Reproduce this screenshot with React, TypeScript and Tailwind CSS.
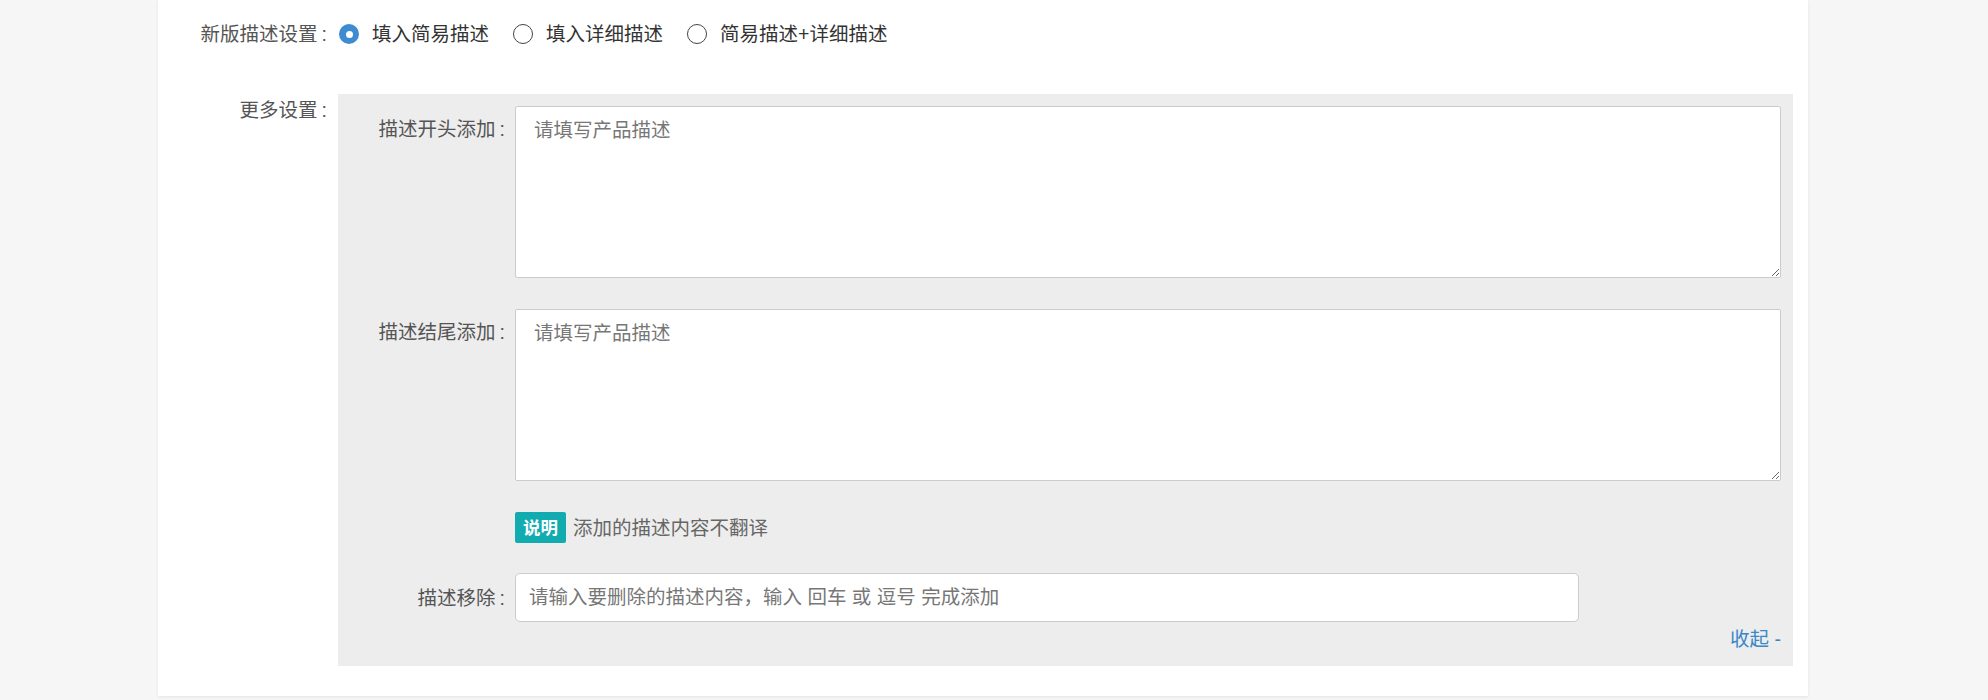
import React, { useState } from 'react';

// Bloque "descripción" del formulario de producto

const FONT = { fontFamily: '"Liberation Sans", "Noto Sans CJK SC", sans-serif' };

type Mode = 'simple' | 'detail' | 'both';

const Label: React.FC<{ text: string }> = ({ text }) => (
    <>
        {text}
        <span className="ml-[4px]">:</span>
    </>
);

const Radio: React.FC<{ checked: boolean; label: string; onClick: () => void }> = ({ checked, label, onClick }) => (
    <label className="flex items-center cursor-pointer mr-[24px]" onClick={onClick}>
        {checked ? (
            <span className="w-[20px] h-[20px] rounded-full bg-[#3d8bd0] flex items-center justify-center">
                <span className="w-[7px] h-[7px] rounded-full bg-white" />
            </span>
        ) : (
            <span className="w-[20px] h-[20px] rounded-full border border-[#444] bg-white" />
        )}
        <span className="ml-[13px] text-[#333]">{label}</span>
    </label>
);

const App: React.FC = () => {
    const [mode, setMode] = useState<Mode>('simple');

    return (
        <div className="min-h-[700px] bg-[#f6f6f6] text-[19.5px] leading-[26px]" style={FONT}>
            <div className="ml-[158px] w-[1650px] h-[696px] bg-white shadow-[0_1px_3px_rgba(0,0,0,0.08)] pt-[19px]">

                {/* Nueva configuración */}
                <div className="flex items-center h-[28px] mt-[1px]">
                    <div className="w-[180px] pr-[11px] text-right text-[#555] whitespace-nowrap">
                        <Label text="新版描述设置" />
                    </div>
                    <div className="flex items-center pl-[1px]">
                        <Radio checked={mode === 'simple'} label="填入简易描述" onClick={() => setMode('simple')} />
                        <Radio checked={mode === 'detail'} label="填入详细描述" onClick={() => setMode('detail')} />
                        <Radio checked={mode === 'both'} label="简易描述+详细描述" onClick={() => setMode('both')} />
                    </div>
                </div>

                {/* Más ajustes */}
                <div className="flex mt-[46px]">
                    <div className="w-[180px] pr-[11px] pt-[3px] text-right text-[#555] whitespace-nowrap">
                        <Label text="更多设置" />
                    </div>
                    <div className="w-[1455px] bg-[#ededed] pt-[12px] pr-[12px] pb-[14px]">
                        <div className="flex">
                            <div className="w-[177px] pr-[10px] pt-[10px] text-right text-[#555] whitespace-nowrap">
                                <Label text="描述开头添加" />
                            </div>
                            <textarea
                                placeholder="请填写产品描述"
                                className="w-[1266px] h-[172px] border border-[#ccc] bg-white rounded-[2px] px-[18px] py-[10px] text-[#333] placeholder:text-[#777] outline-none"
                            />
                        </div>
                        <div className="flex mt-[31px]">
                            <div className="w-[177px] pr-[10px] pt-[10px] text-right text-[#555] whitespace-nowrap">
                                <Label text="描述结尾添加" />
                            </div>
                            <textarea
                                placeholder="请填写产品描述"
                                className="w-[1266px] h-[172px] border border-[#ccc] bg-white rounded-[2px] px-[18px] py-[10px] text-[#333] placeholder:text-[#777] outline-none"
                            />
                        </div>
                        <div className="flex items-center mt-[31px] pl-[177px]">
                            <span className="h-[31px] w-[51px] flex items-center justify-center bg-[#12acb0] text-white text-[17.5px] font-bold rounded-[2px]">说明</span>
                            <span className="ml-[7px] text-[#666]">添加的描述内容不翻译</span>
                        </div>
                        <div className="flex items-center mt-[30px]">
                            <div className="w-[177px] pr-[10px] text-right text-[#555] whitespace-nowrap">
                                <Label text="描述移除" />
                            </div>
                            <input
                                placeholder="请输入要删除的描述内容，输入 回车 或 逗号 完成添加"
                                className="w-[1064px] h-[49px] border border-[#ccc] bg-white rounded-[5px] px-[13px] text-[#333] placeholder:text-[#777] outline-none"
                            />
                        </div>
                        <div className="flex justify-end mt-[4px]">
                            <a className="text-[#3a87c8] cursor-pointer">收起 -</a>
                        </div>
                    </div>
                </div>
            </div>
        </div>
    );
};

export default App;
